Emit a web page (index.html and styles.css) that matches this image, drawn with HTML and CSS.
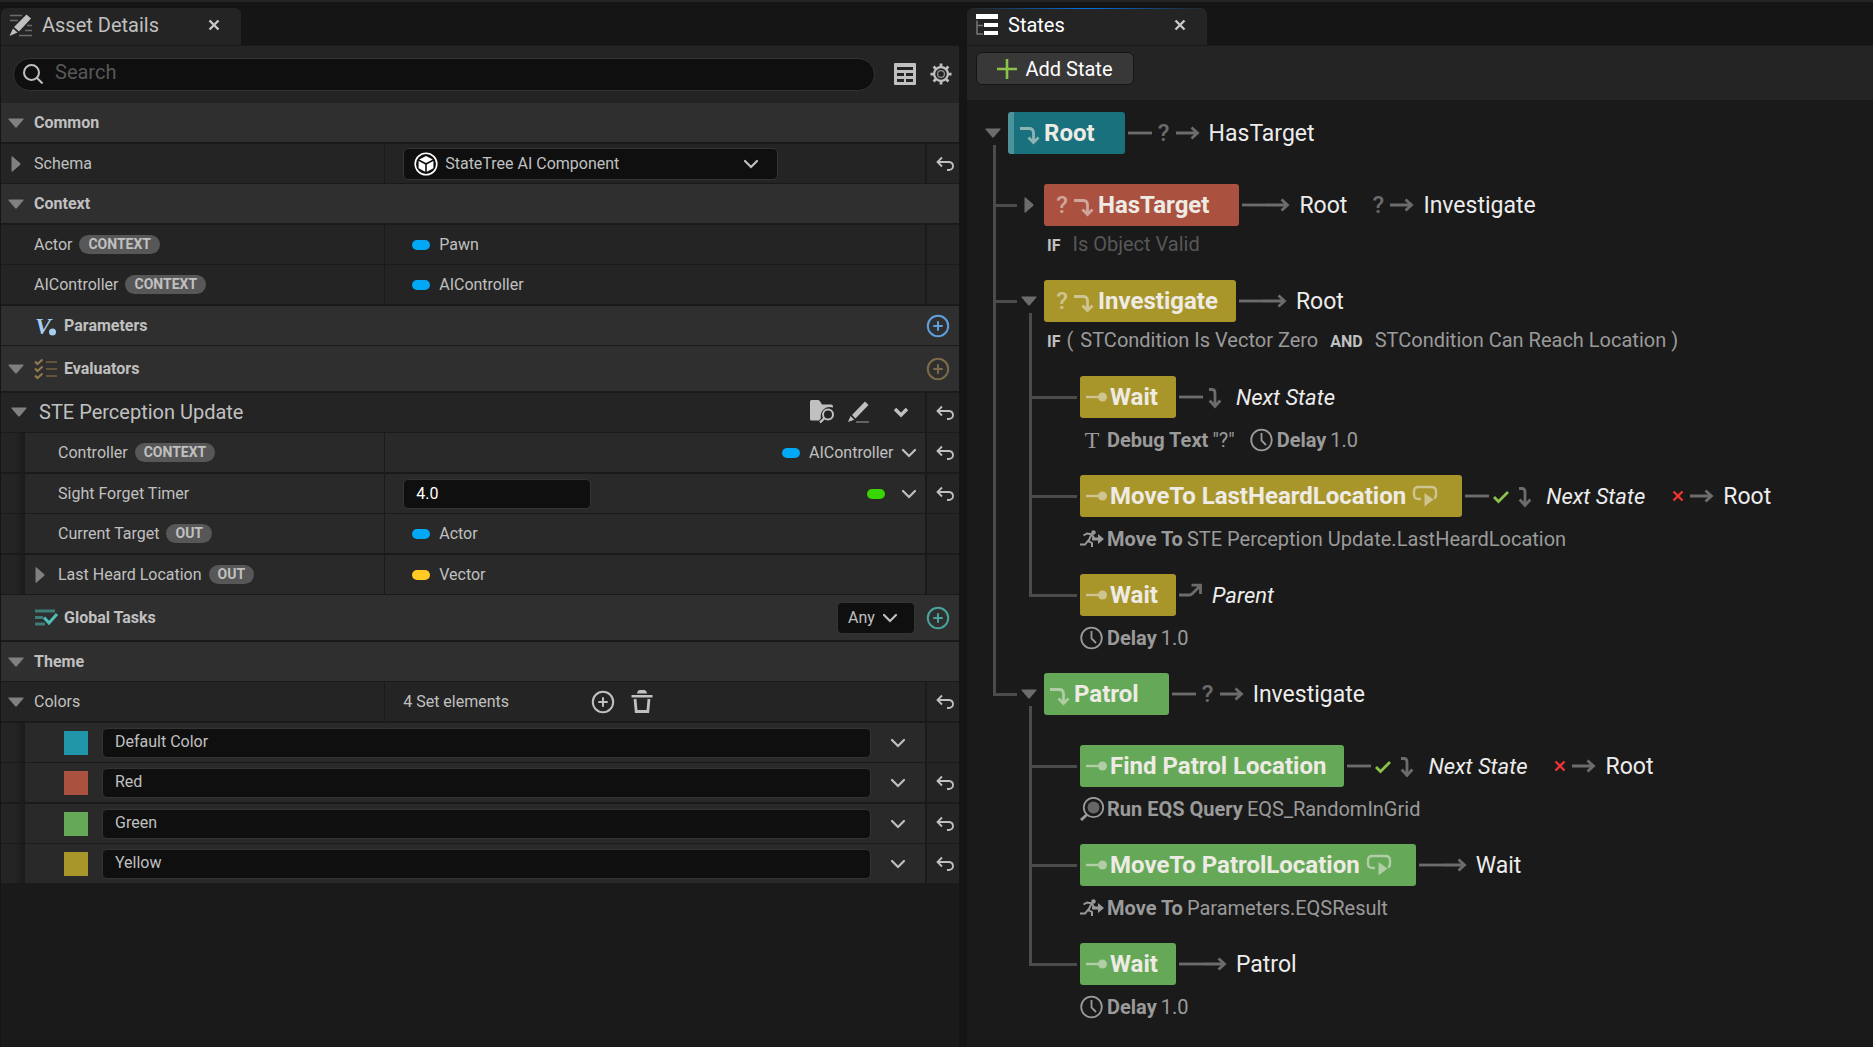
FILE: index.html
```html
<!DOCTYPE html>
<html lang="en">
<head>
    <meta charset="UTF-8">
    <meta name="viewport" content="width=device-width, initial-scale=1.0">
    <title>StateTree Editor</title>
    <link rel="stylesheet" href="styles.css">
</head>
<body>
    <!-- Icon sprite -->
    <svg class="sprite" aria-hidden="true">
        <symbol id="i-open" viewBox="0 0 16 16"><path d="M1 3.500h14c.7 0 .8.600.4 1L9 12c-.6.700-1.400.700-2 0L.600 4.500c-.4-.4-.3-1 .4-1z"/></symbol>
        <symbol id="i-shut" viewBox="0 0 16 16"><path d="M3.500 1v14c0 .7.600.8 1 .4L12 9c.7-.6.700-1.400 0-2L4.500.600c-.4-.4-1-.3-1 .4z"/></symbol>
        <symbol id="i-close" viewBox="0 0 12 12"><path d="M1.500 1.500l9 9M10.500 1.500l-9 9" fill="none" stroke="currentColor" stroke-width="2.400"/></symbol>
        <symbol id="i-down" viewBox="0 0 16 16"><path d="M2 5l6 6 6-6" fill="none" stroke="currentColor" stroke-width="2.200" stroke-linecap="round"/></symbol>
        <symbol id="i-down-bold" viewBox="0 0 16 16"><path d="M2 5l6 6 6-6" fill="none" stroke="currentColor" stroke-width="3.400"/></symbol>
        <symbol id="i-undo" viewBox="0 0 18 16"><path d="M6 1.500L1.500 6 6 10.500M1.500 6H13q4 .5 4 4t-4 4h-2" fill="none" stroke="currentColor" stroke-width="1.800"/></symbol>
        <symbol id="i-plus" viewBox="0 0 24 24"><g fill="none" stroke="currentColor" stroke-width="2"><circle cx="12" cy="12" r="10.200"/><path d="M12 7.300v9.400M7.300 12h9.400"/></g></symbol>
        <symbol id="i-dash" viewBox="0 0 24 24"><path d="M0 12h24" stroke="currentColor" stroke-width="2.800"/></symbol>
        <symbol id="i-arrow" viewBox="0 0 24 24"><path d="M0 12h21M15.500 6.500l6 5.500-6 5.500" fill="none" stroke="currentColor" stroke-width="2.800"/></symbol>
        <symbol id="i-next" viewBox="0 0 24 24"><path d="M6 4.500h3Q12 4.500 12 8v13M6.700 15.500l5.300 6 5.300-6" fill="none" stroke="currentColor" stroke-width="2.800"/></symbol>
        <symbol id="i-parent" viewBox="0 0 24 24"><path d="M0 12h10q2 0 3.500-1.500L21 3M12.500 2.200h9V11" fill="none" stroke="currentColor" stroke-width="2.800"/></symbol>
        <symbol id="i-turn" viewBox="0 0 24 24"><path d="M0 7.500h9q4.500 0 4.500 4.500v8M8.500 16.500l5 5 5-5" fill="none" stroke="currentColor" stroke-width="2.800"/></symbol>
        <symbol id="i-leaf" viewBox="0 0 24 24"><path d="M0 12h14" stroke="currentColor" stroke-width="2.400"/><circle cx="16.500" cy="12" r="4.500"/></symbol>
        <symbol id="i-loop" viewBox="0 0 26 22"><path d="M9 14H6.500Q2 14 2 9.500V6.500Q2 2 6.500 2h13Q24 2 24 6.500v3q0 3-2 4" fill="none" stroke="currentColor" stroke-width="2.400"/><path d="M12.500 8v13.500l9-7z"/></symbol>
        <symbol id="i-check" viewBox="0 0 24 24"><path d="M5 13l4.500 4.500L19 8" fill="none" stroke="#8bc24a" stroke-width="2.800"/></symbol>
        <symbol id="i-fail" viewBox="0 0 24 24"><path d="M7.500 7.500l9 9M16.500 7.500l-9 9" fill="none" stroke="#ef3535" stroke-width="2.400"/></symbol>
        <symbol id="i-clock" viewBox="0 0 24 24"><g fill="none" stroke="currentColor" stroke-width="1.800"><circle cx="11.500" cy="12" r="10.300"/><path d="M11.500 5v7.500l4.500 4.500"/></g></symbol>
        <symbol id="i-run" viewBox="0 0 24 24"><circle cx="13.500" cy="5.500" r="2.200"/><path d="M0 17.500h5l4-5M3.500 8.500l3.500-2 4.500.8L8.500 14l3.500 2v4M12 8l2.500 3.500" fill="none" stroke="currentColor" stroke-width="2"/><path d="M12 10.500h6V7l6 5-6 5v-3.500h-6z"/></symbol>
        <symbol id="i-eqs" viewBox="0 0 24 24"><circle cx="13.500" cy="10.500" r="6" opacity=".6"/><circle cx="13.500" cy="10.500" r="9.700" fill="none" stroke="currentColor" stroke-width="1.800"/><path d="M7 17.500l-6 5.500" stroke="currentColor" stroke-width="3"/></symbol>
    </svg>

    <main class="editor">
        <!-- Details panel -->
        <section class="panel">
            <div class="tab-bar">
                <div class="tab">
                    <svg class="tab-icon" viewBox="0 0 24 24"><path d="M1 2.500h12M1 7.500h8M18 12.500h5M16 17.500h7M10 22.500h13" stroke="#6b6b6b" stroke-width="1.600"/><path d="M17.500 1.500l4.500 4-12 13-5-4.500zM4 15.500l4.500 4L.500 23z" fill="currentColor"/></svg>
                    <span class="tab-title">Asset Details</span>
                    <button class="tab-close" aria-label="Close Asset Details"><svg><use href="#i-close"/></svg></button>
                </div>
            </div>

            <div class="toolbar">
                <label class="search">
                    <svg viewBox="0 0 20 20"><g fill="none" stroke="currentColor" stroke-width="2"><circle cx="8.500" cy="8.500" r="7.500"/><path d="M13.800 13.800l5.700 5.700"/></g></svg>
                    <input type="text" placeholder="Search" aria-label="Search">
                </label>
                <button class="tool" aria-label="Property matrix"><svg viewBox="0 0 22 22"><path fill-rule="evenodd" d="M1 0h20q1 0 1 1v20q0 1-1 1H1q-1 0-1-1V1q0-1 1-1zM3 4v3h16V4zM3 10v3h7v-3zM12 10v3h7v-3zM3 16v3h7v-3zM12 16v3h7v-3z"/></svg></button>
                <button class="tool" aria-label="Settings"><svg viewBox="0 0 24 24"><g fill="none" stroke="currentColor"><circle cx="12" cy="12" r="7.500" stroke-width="2.400"/><circle cx="12" cy="12" r="3.700" stroke-width="1.400" opacity=".7"/><path stroke-width="3" d="M12 .500v4M12 19.500v4M.500 12h4M19.500 12h4M3.900 3.900l2.800 2.800M17.300 17.300l2.800 2.800M3.900 20.100l2.800-2.800M17.300 6.700l2.800-2.800"/></g></svg></button>
            </div>

            <div class="header wide">
                <button class="expander" aria-label="Collapse"><svg><use href="#i-open"/></svg></button>
                <h2>Common</h2>
            </div>
            <div class="row">
                <div class="name">
                    <button class="expander" aria-label="Expand"><svg><use href="#i-shut"/></svg></button>
                    <label for="schema">Schema</label>
                </div>
                <div class="value">
                    <div class="combo schema">
                        <svg class="combo-icon" viewBox="0 0 24 24"><circle cx="12" cy="12" r="10.800" fill="none" stroke="#fff" stroke-width="1.600"/><path fill="#fff" d="M12 4l6.800 3.500L12 11 5.200 7.500zM4.600 9l6.600 3.500v7.300l-6.600-3.500zM19.400 9l-6.600 3.500v7.300l6.600-3.500z"/></svg>
                        <select id="schema"><option>StateTree AI Component</option></select>
                        <svg class="chevron"><use href="#i-down"/></svg>
                    </div>
                </div>
                <div class="reset"><button aria-label="Reset"><svg><use href="#i-undo"/></svg></button></div>
            </div>

            <div class="header wide">
                <button class="expander" aria-label="Collapse"><svg><use href="#i-open"/></svg></button>
                <h2>Context</h2>
            </div>
            <div class="row">
                <div class="name"><span class="no-expander"></span>Actor <span class="badge">CONTEXT</span></div>
                <div class="value"><span class="pin object"></span>Pawn</div>
                <div class="reset"></div>
            </div>
            <div class="row wide">
                <div class="name"><span class="no-expander"></span>AIController <span class="badge">CONTEXT</span></div>
                <div class="value"><span class="pin object"></span>AIController</div>
                <div class="reset"></div>
            </div>

            <div class="header">
                <span class="no-expander"></span>
                <svg class="header-icon" viewBox="0 0 24 24"><text x="1" y="20" class="variable">V</text><circle cx="18.500" cy="18" r="3.500" fill="#a5cdf0"/></svg>
                <h2>Parameters</h2>
                <button class="add blue" aria-label="Add parameter"><svg><use href="#i-plus"/></svg></button>
            </div>
            <div class="header tall wide">
                <button class="expander" aria-label="Collapse"><svg><use href="#i-open"/></svg></button>
                <svg class="header-icon" viewBox="0 0 24 24"><path d="M1 4.500l2.500 2.500L8.500 2.500M1 11.500l2.500 2.500 5-4.500M1 18.500l2.500 2.500 5-4.500" fill="none" stroke="#947a50" stroke-width="2"/><path d="M12 5h11M12 12h11M12 19h11" stroke="#62533a" stroke-width="2.200"/></svg>
                <h2>Evaluators</h2>
                <button class="add brown" aria-label="Add evaluator"><svg><use href="#i-plus"/></svg></button>
            </div>

            <div class="row titled">
                <div class="name">
                    <button class="expander" aria-label="Collapse"><svg><use href="#i-open"/></svg></button>
                    <h3>STE Perception Update</h3>
                </div>
                <div class="value actions">
                    <button aria-label="Browse to asset"><svg class="large" viewBox="0 0 24 24"><path d="M0 1.500Q0 0 1.500 0H8q1.500 0 2.500 2l1.500 2.500h9q2 0 2 2v1q-6-1.500-9.500 2T11 18l-2 2.500H1.500Q0 20.500 0 19z"/><g fill="none" stroke="currentColor"><circle cx="18" cy="14.500" r="5" stroke-width="2"/><path d="M14.500 18L10 22.500" stroke-width="2.400"/></g></svg></button>
                    <button aria-label="Edit"><svg class="large" viewBox="0 0 24 24"><path d="M19 1.500l3.500 3.500L9.500 18.500 6 15zM4.500 16l3.800 3.800L2 22z"/><path d="M10 22h13" stroke="#777" stroke-width="1.500"/></svg></button>
                    <button aria-label="Options"><svg class="chevron"><use href="#i-down-bold"/></svg></button>
                </div>
                <div class="reset"><button aria-label="Reset"><svg><use href="#i-undo"/></svg></button></div>
            </div>
            <div class="row nested wide">
                <div class="name"><span class="gutter"></span><span class="no-expander"></span><label for="controller">Controller</label> <span class="badge">CONTEXT</span></div>
                <div class="value binding">
                    <span class="pin object"></span>
                    <select id="controller"><option>AIController</option></select>
                    <svg class="chevron"><use href="#i-down"/></svg>
                </div>
                <div class="reset"><button aria-label="Reset"><svg><use href="#i-undo"/></svg></button></div>
            </div>
            <div class="row nested">
                <div class="name"><span class="gutter"></span><span class="no-expander"></span><label for="timer">Sight Forget Timer</label></div>
                <div class="value">
                    <input class="field number" id="timer" type="text" value="4.0">
                    <button class="bind" aria-label="Bind property"><span class="pin float"></span><svg class="chevron"><use href="#i-down"/></svg></button>
                </div>
                <div class="reset"><button aria-label="Reset"><svg><use href="#i-undo"/></svg></button></div>
            </div>
            <div class="row nested wide">
                <div class="name"><span class="gutter"></span><span class="no-expander"></span>Current Target <span class="badge">OUT</span></div>
                <div class="value"><span class="pin object"></span>Actor</div>
                <div class="reset"></div>
            </div>
            <div class="row nested">
                <div class="name"><span class="gutter"></span><button class="expander" aria-label="Expand"><svg><use href="#i-shut"/></svg></button>Last Heard Location <span class="badge">OUT</span></div>
                <div class="value"><span class="pin vector"></span>Vector</div>
                <div class="reset"></div>
            </div>

            <div class="header tall wide">
                <span class="no-expander"></span>
                <svg class="header-icon" viewBox="0 0 24 24"><path d="M1 5h20M1 11.500h8M1 18h10" stroke="#3c7f79" stroke-width="3"/><path d="M10 11.500l5 5.500 9-9.500" fill="none" stroke="#2f2f2f" stroke-width="6"/><path d="M10 11.500l5 5.500 8-9" fill="none" stroke="#4cc0b5" stroke-width="3"/></svg>
                <h2>Global Tasks</h2>
                <div class="combo any">
                    <select aria-label="Task completion"><option>Any</option></select>
                    <svg class="chevron"><use href="#i-down"/></svg>
                </div>
                <button class="add teal" aria-label="Add global task"><svg><use href="#i-plus"/></svg></button>
            </div>
            <div class="header">
                <button class="expander" aria-label="Collapse"><svg><use href="#i-open"/></svg></button>
                <h2>Theme</h2>
            </div>
            <div class="row wide">
                <div class="name"><button class="expander" aria-label="Collapse"><svg><use href="#i-open"/></svg></button>Colors</div>
                <div class="value elements">
                    <span class="count">4 Set elements</span>
                    <button aria-label="Add element"><svg class="large"><use href="#i-plus"/></svg></button>
                    <button aria-label="Remove all elements"><svg class="large" viewBox="0 0 24 24"><path d="M1.500 5h21v2.500h-21zM7 3.500Q7.500 0 10 0h4q2.500 0 3 3.500z"/><path d="M5 9l1.200 12.500h11.600L19 9" fill="none" stroke="currentColor" stroke-width="2.800"/></svg></button>
                </div>
                <div class="reset"><button aria-label="Reset"><svg><use href="#i-undo"/></svg></button></div>
            </div>
            <div class="row nested color">
                <div class="value"><span class="gutter"></span><span class="swatch default"></span><input class="field" type="text" value="Default Color" aria-label="Color name"><button class="more" aria-label="Options"><svg class="chevron"><use href="#i-down"/></svg></button></div>
                <div class="reset"></div>
            </div>
            <div class="row nested color wide">
                <div class="value"><span class="gutter"></span><span class="swatch red"></span><input class="field" type="text" value="Red" aria-label="Color name"><button class="more" aria-label="Options"><svg class="chevron"><use href="#i-down"/></svg></button></div>
                <div class="reset"><button aria-label="Reset"><svg><use href="#i-undo"/></svg></button></div>
            </div>
            <div class="row nested color">
                <div class="value"><span class="gutter"></span><span class="swatch green"></span><input class="field" type="text" value="Green" aria-label="Color name"><button class="more" aria-label="Options"><svg class="chevron"><use href="#i-down"/></svg></button></div>
                <div class="reset"><button aria-label="Reset"><svg><use href="#i-undo"/></svg></button></div>
            </div>
            <div class="row nested color">
                <div class="value"><span class="gutter"></span><span class="swatch yellow"></span><input class="field" type="text" value="Yellow" aria-label="Color name"><button class="more" aria-label="Options"><svg class="chevron"><use href="#i-down"/></svg></button></div>
                <div class="reset"><button aria-label="Reset"><svg><use href="#i-undo"/></svg></button></div>
            </div>
        </section>

        <!-- State tree panel -->
        <section class="panel">
            <div class="tab-bar">
                <div class="tab active">
                    <svg class="tab-icon" viewBox="0 0 24 24"><path d="M1 1h22v5H1zM9 10h14v4H9zM9 18h14v4H9z" fill="currentColor"/><path d="M2 7.500V21h6M2 12.500h6" fill="none" stroke="#777" stroke-width="1.500"/></svg>
                    <span class="tab-title">States</span>
                    <button class="tab-close" aria-label="Close States"><svg><use href="#i-close"/></svg></button>
                </div>
            </div>
            <div class="toolbar states">
                <button class="add-state"><svg viewBox="0 0 20 20"><path d="M10 0v20M0 10h20" stroke="#8bc24a" stroke-width="2.600"/></svg>Add State</button>
            </div>

            <ul class="tree">
                <li>
                    <div class="state parent bare">
                        <div class="head">
                            <button class="expander" aria-label="Collapse"><svg><use href="#i-open"/></svg></button>
                            <div class="node default root spaced"><svg><use href="#i-turn"/></svg>Root</div>
                            <div class="links"><svg><use href="#i-dash"/></svg><b>?</b><svg><use href="#i-arrow"/></svg><span>HasTarget</span></div>
                        </div>
                    </div>
                    <ul>
                        <li>
                            <div class="state">
                                <div class="head">
                                    <button class="expander" aria-label="Expand"><svg><use href="#i-shut"/></svg></button>
                                    <div class="node red spaced"><b>?</b><svg><use href="#i-turn"/></svg>HasTarget</div>
                                    <div class="links"><svg><use href="#i-dash"/></svg><svg><use href="#i-arrow"/></svg><span>Root</span></div>
                                    <div class="links more-links"><b>?</b><svg><use href="#i-arrow"/></svg><span>Investigate</span></div>
                                </div>
                                <div class="conditions"><b>IF</b><span class="disabled">Is Object Valid</span></div>
                            </div>
                        </li>
                        <li>
                            <div class="state parent">
                                <div class="head">
                                    <button class="expander" aria-label="Collapse"><svg><use href="#i-open"/></svg></button>
                                    <div class="node yellow"><b>?</b><svg><use href="#i-turn"/></svg>Investigate</div>
                                    <div class="links"><svg><use href="#i-dash"/></svg><svg><use href="#i-arrow"/></svg><span>Root</span></div>
                                </div>
                                <div class="conditions"><b>IF</b><i>(</i><span>STCondition Is Vector Zero</span><b>AND</b><span>STCondition Can Reach Location )</span></div>
                            </div>
                            <ul>
                                <li class="leaf">
                                    <div class="state">
                                        <div class="head">
                                            <div class="node yellow"><svg><use href="#i-leaf"/></svg>Wait</div>
                                            <div class="links"><svg><use href="#i-dash"/></svg><svg><use href="#i-next"/></svg><em>Next State</em></div>
                                        </div>
                                        <div class="tasks">
                                            <span class="task"><svg viewBox="0 0 24 24"><text x="12" y="20" class="text-task">T</text></svg><b>Debug Text</b> "?"</span>
                                            <span class="task"><svg><use href="#i-clock"/></svg><b>Delay</b> 1.0</span>
                                        </div>
                                    </div>
                                </li>
                                <li class="leaf">
                                    <div class="state">
                                        <div class="head">
                                            <div class="node yellow"><svg><use href="#i-leaf"/></svg>MoveTo LastHeardLocation<svg class="loop"><use href="#i-loop"/></svg></div>
                                            <div class="links"><svg><use href="#i-dash"/></svg><svg><use href="#i-check"/></svg><svg><use href="#i-next"/></svg><em>Next State</em></div>
                                            <div class="links more-links"><svg><use href="#i-fail"/></svg><svg><use href="#i-arrow"/></svg><span>Root</span></div>
                                        </div>
                                        <div class="tasks">
                                            <span class="task"><svg><use href="#i-run"/></svg><b>Move To</b> STE Perception Update.LastHeardLocation</span>
                                        </div>
                                    </div>
                                </li>
                                <li class="leaf">
                                    <div class="state">
                                        <div class="head">
                                            <div class="node yellow"><svg><use href="#i-leaf"/></svg>Wait</div>
                                            <div class="links"><svg><use href="#i-parent"/></svg><em>Parent</em></div>
                                        </div>
                                        <div class="tasks">
                                            <span class="task"><svg><use href="#i-clock"/></svg><b>Delay</b> 1.0</span>
                                        </div>
                                    </div>
                                </li>
                            </ul>
                        </li>
                        <li>
                            <div class="state parent bare">
                                <div class="head">
                                    <button class="expander" aria-label="Collapse"><svg><use href="#i-open"/></svg></button>
                                    <div class="node green spaced"><svg><use href="#i-turn"/></svg>Patrol</div>
                                    <div class="links"><svg><use href="#i-dash"/></svg><b>?</b><svg><use href="#i-arrow"/></svg><span>Investigate</span></div>
                                </div>
                            </div>
                            <ul>
                                <li class="leaf">
                                    <div class="state">
                                        <div class="head">
                                            <div class="node green"><svg><use href="#i-leaf"/></svg>Find Patrol Location</div>
                                            <div class="links"><svg><use href="#i-dash"/></svg><svg><use href="#i-check"/></svg><svg><use href="#i-next"/></svg><em>Next State</em></div>
                                            <div class="links more-links"><svg><use href="#i-fail"/></svg><svg><use href="#i-arrow"/></svg><span>Root</span></div>
                                        </div>
                                        <div class="tasks">
                                            <span class="task"><svg><use href="#i-eqs"/></svg><b>Run EQS Query</b> EQS_RandomInGrid</span>
                                        </div>
                                    </div>
                                </li>
                                <li class="leaf">
                                    <div class="state">
                                        <div class="head">
                                            <div class="node green"><svg><use href="#i-leaf"/></svg>MoveTo PatrolLocation<svg class="loop"><use href="#i-loop"/></svg></div>
                                            <div class="links"><svg><use href="#i-dash"/></svg><svg><use href="#i-arrow"/></svg><span>Wait</span></div>
                                        </div>
                                        <div class="tasks">
                                            <span class="task"><svg><use href="#i-run"/></svg><b>Move To</b> Parameters.EQSResult</span>
                                        </div>
                                    </div>
                                </li>
                                <li class="leaf">
                                    <div class="state">
                                        <div class="head">
                                            <div class="node green"><svg><use href="#i-leaf"/></svg>Wait</div>
                                            <div class="links"><svg><use href="#i-dash"/></svg><svg><use href="#i-arrow"/></svg><span>Patrol</span></div>
                                        </div>
                                        <div class="tasks">
                                            <span class="task"><svg><use href="#i-clock"/></svg><b>Delay</b> 1.0</span>
                                        </div>
                                    </div>
                                </li>
                            </ul>
                        </li>
                    </ul>
                </li>
            </ul>
        </section>
    </main>
</body>
</html>
```
FILE: styles.css
```css
* {
    box-sizing: border-box;
}
body {
    margin: 0;
    background: #151515;
    color: #c0c0c0;
    font-family: Roboto, "Liberation Sans", sans-serif;
    font-size: 16px;
}
button, input, select {
    font: inherit;
    color: inherit;
    background: none;
    border: 0;
    margin: 0;
    padding: 0;
}
button {
    display: flex;
    align-items: center;
    justify-content: center;
    cursor: pointer;
}
select {
    appearance: none;
    min-width: 0;
}
h2, h3 {
    margin: 0;
    font-size: 16px;
}
h3 {
    font-size: 20px;
    font-weight: 400;
}
svg {
    display: block;
    flex: none;
    fill: currentColor;
}
.sprite {
    display: none;
}
.editor {
    display: grid;
    grid-template-columns: 958fr 906fr;
    column-gap: 8px;
    min-height: 100vh;
    padding: 0 0 1px 1px;
    border-top: 2px solid #242424;
}
.panel {
    min-width: 0;
    background: #1a1a1a;
}

/* Tabs */
.tab-bar {
    background: #151515;
    padding-top: 6px;
    border-bottom: 1px solid #1a1a1a;
}
.tab {
    display: flex;
    align-items: center;
    width: 240px;
    height: 37px;
    padding: 0 16px 4px 8px;
    background: #242424;
    border-radius: 6px 6px 0 0;
    font-size: 20px;
}
.tab.active {
    color: #fff;
    background: linear-gradient(90deg, #242424, #0070e0, #242424) top / 100% 1px no-repeat #242424;
}
.tab-icon {
    width: 24px;
    height: 24px;
    margin-right: 9px;
}
.tab-title {
    flex: 1;
}
.tab-close {
    width: 22px;
    height: 22px;
    color: #c8c8c8;
}
.tab-close svg {
    width: 12px;
    height: 12px;
}

/* Toolbars */
.toolbar {
    display: flex;
    align-items: center;
    gap: 12px;
    height: 57px;
    padding: 0 6px 1px 12px;
    background: #242424;
}
.toolbar.states {
    height: 54px;
    padding: 0 9px 9px;
}
.search {
    display: flex;
    align-items: center;
    flex: 1;
    height: 33px;
    margin-right: 6px;
    padding-left: 9px;
    background: #0f0f0f;
    border: 1px solid #343434;
    border-radius: 17px;
}
.search svg {
    width: 20px;
    height: 20px;
}
.search input {
    flex: 1;
    min-width: 0;
    padding: 0 12px 4px;
    outline: 0;
    font-size: 20px;
}
.search input::placeholder {
    color: #575757;
}
.tool svg {
    width: 24px;
    height: 22px;
}
.add-state {
    gap: 8px;
    width: 158px;
    height: 33px;
    color: #fff;
    background: #383838;
    border: 1px solid #151515;
    border-radius: 6px;
    font-size: 20px;
}
.add-state svg {
    width: 20px;
    height: 20px;
}

/* Property rows */
.header, .row {
    border-bottom: 1px solid #1a1a1a;
}
.header.wide, .row.wide {
    border-bottom-width: 2px;
}
.header {
    display: flex;
    align-items: center;
    height: 40px;
    padding-right: 9px;
    background: #2f2f2f;
}
.header.wide {
    height: 41px;
}
.header.tall {
    height: 47px;
}
.row {
    display: grid;
    grid-template-columns: 40% 1fr 34px;
    height: 40px;
    background: #242424;
}
.row.wide {
    height: 41px;
}
.row.color {
    grid-template-columns: 1fr 34px;
}
.name, .value, .reset {
    display: flex;
    align-items: center;
    min-width: 0;
    white-space: nowrap;
}
.value {
    padding-left: 18px;
    border-left: 1px solid #1a1a1a;
}
.reset {
    justify-content: center;
    padding-left: 4px;
    border-left: 2px solid #1a1a1a;
}
.reset svg {
    width: 18px;
    height: 16px;
}
.nested .name, .nested .value {
    background: #292929;
}
.gutter {
    flex: none;
    align-self: stretch;
    width: 24px;
    background: linear-gradient(90deg, #242424 60%, #1a1a1a);
}
.expander, .no-expander {
    flex: none;
    width: 16px;
    margin: 0 10px 0 7px;
}
.expander {
    color: #808080;
}
.expander svg {
    width: 16px;
    height: 16px;
}
.titled .expander {
    margin: 0 12px 0 10px;
}
.titled .name, .titled .value {
    padding-bottom: 2px;
}
.titled .value, .color .value {
    border-left: 0;
}
.header-icon {
    width: 24px;
    height: 24px;
    margin-right: 6px;
    overflow: visible;
}
.variable {
    font: italic bold 24px "Liberation Serif", serif;
    fill: #a5cdf0;
}
.badge {
    height: 19px;
    margin-left: 7px;
    padding: 0 9px;
    border-radius: 10px;
    background: #575757;
    font-size: 14px;
    font-weight: 700;
    line-height: 19px;
}
.pin {
    flex: none;
    width: 18px;
    height: 10px;
    margin: 0 9px;
    border-radius: 5px;
}
.pin.object {
    background: #00a8f6;
}
.pin.vector {
    background: #ffca23;
}
.pin.float {
    background: #38d500;
}
.chevron {
    width: 16px;
    height: 16px;
}
.large {
    width: 24px;
    height: 24px;
}
.combo {
    display: flex;
    align-items: center;
    height: 32px;
    background: #0f0f0f;
    border: 1px solid #343434;
    border-radius: 5px;
}
.combo select {
    flex: 1;
}
.schema {
    width: 375px;
    padding: 0 18px 0 10px;
}
.combo-icon {
    width: 24px;
    height: 24px;
    margin-right: 7px;
}
.any {
    width: 78px;
    margin-left: auto;
    padding: 0 16px 0 10px;
}
.add {
    margin-left: auto;
}
.any + .add {
    margin-left: 11px;
}
.add svg {
    width: 24px;
    height: 24px;
}
.blue { color: #5f9fdc; }
.brown { color: #7c6a4a; }
.teal { color: #48a39b; }
.actions {
    justify-content: flex-end;
    gap: 12px;
    padding-right: 16px;
}
.actions .chevron {
    margin-left: 11px;
}
.binding {
    justify-content: flex-end;
    padding-right: 8px;
}
.binding .chevron {
    margin-left: 7px;
}
.bind {
    margin-left: auto;
    padding-right: 8px;
}
.bind .chevron {
    margin-left: 7px;
}
.field {
    height: 30px;
    background: #0f0f0f;
    border: 1px solid #343434;
    border-radius: 5px;
    padding: 0 12px;
}
.number {
    width: 188px;
    color: #fff;
}
.elements {
    gap: 15px;
}
.count {
    width: 173px;
}
.color .value {
    padding-left: 0;
}
.color .field {
    flex: 1;
    min-width: 0;
    padding-bottom: 3px;
}
.swatch {
    flex: none;
    width: 24px;
    height: 24px;
    margin: 0 14px 0 39px;
}
.swatch.default { background: #2196a8; }
.swatch.red { background: #aa523f; }
.swatch.green { background: #65a958; }
.swatch.yellow { background: #a9962b; }
.more {
    width: 54px;
}

/* State tree. Every li starts at the connector line of its parent. */
.tree, .tree ul {
    list-style: none;
    margin: 0;
    padding: 0;
}
.tree {
    padding-left: 18px;
    white-space: nowrap;
}
.tree > li > ul {
    margin-left: 8px;
}
.tree ul ul {
    margin-left: 36px;
}
.tree ul > li {
    background:
        linear-gradient(#4b4b4b, #4b4b4b) 0 0 / 3px 100% no-repeat,
        linear-gradient(#4b4b4b, #4b4b4b) 0 32px / 24px 3px no-repeat;
}
.tree ul > li.leaf {
    background-size: 3px 100%, 48px 3px;
}
.tree ul > li:last-child {
    background-size: 3px 35px, 24px 3px;
}
.tree ul > li.leaf:last-child {
    background-size: 3px 35px, 48px 3px;
}
.tree ul .state {
    margin-left: 28px;
}
.state {
    padding-top: 12px;
}
.state.parent {
    background: linear-gradient(#4b4b4b, #4b4b4b) 8px 45px / 3px 100% no-repeat;
}
.state.bare {
    padding-bottom: 18px;
}
.head {
    display: flex;
    align-items: center;
    height: 42px;
}
.head .expander {
    margin: 0 7px 0 0;
    color: #6c6c6c;
}
.leaf .node {
    margin-left: 23px;
}
.node {
    display: flex;
    align-items: center;
    height: 42px;
    margin-right: 3px;
    padding: 0 18px 0 6px;
    border: 0 solid;
    border-radius: 3px;
    color: #eeebe4;
    font-size: 24px;
    font-weight: 700;
}
.node.spaced {
    padding-right: 30px;
}
.node.default { background: #18717d; }
.node.red { background: #aa523f; }
.node.yellow { background: #a9962b; }
.node.green { background: #65a958; }
.node.root {
    border-left: 6px solid #4d939c;
}
.node svg, .node b {
    width: 24px;
    opacity: .55;
}
.node svg, .links svg {
    height: 24px;
}
.node .loop {
    width: 26px;
    height: 22px;
    margin: 0 6px;
}
.node b, .links b {
    font-size: 24px;
    font-weight: 500;
    text-align: center;
}
.links {
    display: flex;
    align-items: center;
    color: #6c6c6c;
    font-size: 23px;
}
.links svg, .links b {
    width: 24px;
}
.links span, .links em {
    margin-left: 9px;
    color: #ececec;
}
.links em {
    margin-right: 2px;
    font-size: 22px;
}
.more-links {
    margin-left: 19px;
}
.conditions, .tasks {
    display: flex;
    align-items: center;
    margin-left: 23px;
    color: #9a9a9a;
    font-size: 20px;
}
.conditions {
    align-items: baseline;
    height: 42px;
    padding: 6px 3px 0;
}
.conditions b {
    color: #c0c0c0;
    font-size: 16px;
}
.conditions i {
    margin: 0 -5px 0 6px;
    font-style: normal;
}
.conditions span {
    margin: 0 12px;
}
.conditions .disabled {
    color: #575757;
}
.tasks {
    gap: 15px;
    height: 45px;
    padding-bottom: 1px;
}
.task {
    display: flex;
    align-items: center;
    gap: 4px;
}
.task svg {
    width: 24px;
    height: 24px;
    margin-right: -1px;
}
.text-task {
    font: 24px "Liberation Serif", serif;
    text-anchor: middle;
}
```
